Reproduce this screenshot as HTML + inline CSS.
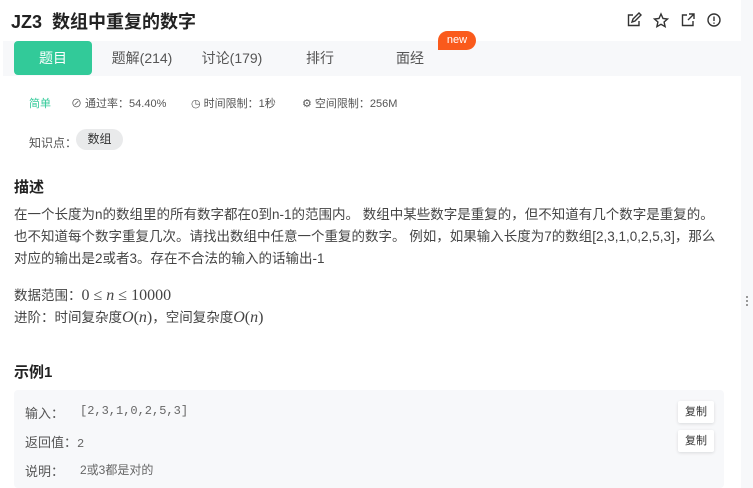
<!DOCTYPE html>
<html><head><meta charset="utf-8"><style>
*{margin:0;padding:0;box-sizing:border-box}
body{width:753px;height:488px;overflow:hidden;background:#fff;font-family:"Liberation Sans","Noto Sans CJK SC",sans-serif;color:#333;position:relative}
.abs{position:absolute;white-space:nowrap}
.side{position:absolute;left:741px;top:0;width:12px;height:488px;background:#f7f8fa}
.tabs{position:absolute;left:3px;top:41px;width:738px;height:35px;background:#f7f8fa}
.tab{position:absolute;top:41px;height:34px;line-height:34px;font-size:14px;color:#555;text-align:center}
.sel{background:#32ca99;color:#fff;border-radius:4px}
.meta{font-size:11px;color:#555}
.p{font-size:13.5px;color:#444;line-height:22px}
.btn{position:absolute;left:678px;width:36px;height:22px;background:#fff;font-size:11px;line-height:22px;text-align:center;color:#333;box-shadow:0 1px 3px rgba(0,0,0,.12);border-radius:2px}
</style></head><body>
<div class="side"></div>
<div class="abs" style="left:746px;top:296px;width:2px;height:2px;background:#999;box-shadow:0 4px 0 #999,0 8px 0 #999"></div>
<div class="abs" style="left:11px;top:8px;font-size:18px;font-weight:bold;color:#222">JZ3&nbsp; 数组中重复的数字</div>
<svg class="abs" style="left:626px;top:12px" width="100" height="16" viewBox="0 0 100 16" fill="none" stroke="#333" stroke-width="1.4">
<path d="M7 3H2.5v10.5H13V9"/><path d="M6 10l1-3 6-6 2 2-6 6z"/>
<path d="M35 2l2 4.5 4.5.5-3.4 3 1 4.6L35 12.3l-4.1 2.3 1-4.6-3.4-3 4.5-.5z"/>
<path d="M61 3h-4.5v10.5H67V9"/><path d="M63 2h5v5M68 2l-6 6"/>
<circle cx="88" cy="8" r="6"/><path d="M88 4.5v4.5M88 10.5v1.3"/>
</svg>
<div class="tabs"></div>
<div class="tab sel" style="left:14px;width:78px">题目</div>
<div class="tab" style="left:102px;width:80px">题解(214)</div>
<div class="tab" style="left:192px;width:80px">讨论(179)</div>
<div class="tab" style="left:300px;width:40px">排行</div>
<div class="tab" style="left:390px;width:40px">面经</div>
<div class="abs" style="left:438px;top:31px;width:38px;height:19px;background:#fa5a1c;color:#fff;font-size:11px;line-height:19px;text-align:center;border-radius:10px 10px 10px 0">new</div>
<div class="abs meta" style="left:29px;top:95px;color:#32ca99">简单</div>
<div class="abs meta" style="left:71px;top:95px">⊘ 通过率：54.40%</div>
<div class="abs meta" style="left:191px;top:95px">◷ 时间限制：1秒</div>
<div class="abs meta" style="left:302px;top:95px">⚙ 空间限制：256M</div>
<div class="abs meta" style="left:29px;top:134px;font-size:12px">知识点：</div>
<div class="abs" style="left:76px;top:129px;width:47px;height:21px;background:#e9eaeb;border-radius:11px;font-size:12px;line-height:21px;text-align:center;color:#333">数组</div>
<div class="abs" style="left:14px;top:176px;font-size:15px;font-weight:bold;color:#222">描述</div>
<div class="abs p" style="left:14px;top:204px">在一个长度为n的数组里的所有数字都在0到n-1的范围内。 数组中某些数字是重复的，但不知道有几个数字是重复的。<br>也不知道每个数字重复几次。请找出数组中任意一个重复的数字。 例如，如果输入长度为7的数组[2,3,1,0,2,5,3]，那么<br>对应的输出是2或者3。存在不合法的输入的话输出-1</div>
<div class="abs p" style="left:14px;top:285px">数据范围：<span style="font-family:'Liberation Serif',serif;font-size:16px">0 ≤ <i>n</i> ≤ 10000</span><br>进阶：时间复杂度<span style="font-family:'Liberation Serif',serif;font-size:16px"><i>O</i>(<i>n</i>)</span>，空间复杂度<span style="font-family:'Liberation Serif',serif;font-size:16px"><i>O</i>(<i>n</i>)</span></div>
<div class="abs" style="left:14px;top:361px;font-size:15px;font-weight:bold;color:#222">示例1</div>
<div class="abs" style="left:14px;top:390px;width:710px;height:98px;background:#f7f8fa;border-radius:4px"></div>
<div class="abs" style="left:25px;top:403px;font-size:13px;color:#555">输入：</div>
<div class="abs" style="left:80px;top:404px;font-size:12px;color:#666;font-family:'Liberation Mono',monospace">[2,3,1,0,2,5,3]</div>
<div class="abs" style="left:25px;top:432px;font-size:13px;color:#555">返回值：<span style="font-family:'Liberation Mono',monospace;font-size:12px;color:#666">2</span></div>
<div class="abs" style="left:25px;top:461px;font-size:13px;color:#555">说明：</div>
<div class="abs" style="left:80px;top:461px;font-size:12px;color:#666">2或3都是对的</div>
<div class="btn" style="top:401px">复制</div>
<div class="btn" style="top:430px">复制</div>
</body></html>
